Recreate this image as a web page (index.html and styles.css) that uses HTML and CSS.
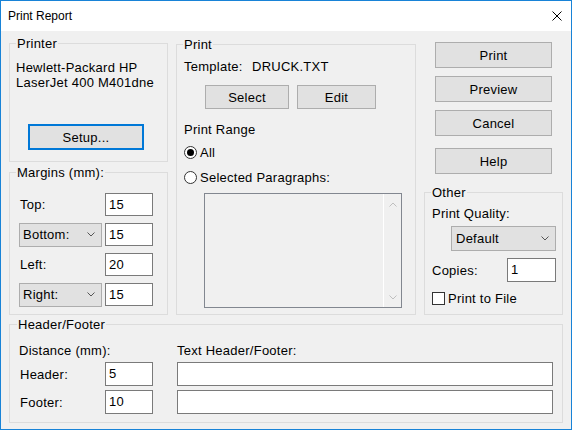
FILE: index.html
```html
<!DOCTYPE html>
<html lang="en">

<head>
  <meta charset="UTF-8">
  <meta name="viewport" content="width=device-width, initial-scale=1.0">
  <title>Print Report</title>
  <link rel="stylesheet" href="styles.css">
</head>

<body>
  <div class="window">
    <div class="titlebar">
      <span class="title">Print Report</span>
      <svg class="close" width="10" height="10" viewBox="0 0 10 10">
        <path d="M0.5 0.5 L9.5 9.5 M9.5 0.5 L0.5 9.5" stroke="#000" stroke-width="1" fill="none" />
      </svg>
    </div>

    <div class="dialog">
      <div class="top-row">
        <div class="col-left">
          <fieldset class="group printer">
            <legend>Printer</legend>
            <div class="printer-name">Hewlett-Packard HP<br>LaserJet 400 M401dne</div>
            <button class="btn btn-default setup-button">Setup...</button>
          </fieldset>

          <fieldset class="group margins">
            <legend>Margins (mm):</legend>
            <div class="margin-grid">
              <span class="field-label">Top:</span>
              <div class="textbox">15</div>
              <div class="combo">Bottom:<svg class="chevron" width="8" height="5" viewBox="0 0 8 5"><polyline points="0.5,0.5 4,4 7.5,0.5" /></svg></div>
              <div class="textbox">15</div>
              <span class="field-label">Left:</span>
              <div class="textbox">20</div>
              <div class="combo">Right:<svg class="chevron" width="8" height="5" viewBox="0 0 8 5"><polyline points="0.5,0.5 4,4 7.5,0.5" /></svg></div>
              <div class="textbox">15</div>
            </div>
          </fieldset>
        </div>

        <fieldset class="group print">
          <legend>Print</legend>
          <div class="template-row"><span class="template-label">Template:</span><span>DRUCK.TXT</span></div>
          <div class="template-buttons">
            <button class="btn select-button">Select</button>
            <button class="btn edit-button">Edit</button>
          </div>
          <div class="range-title">Print Range</div>
          <div class="radio-row radio-all">
            <span class="radio checked"></span>
            <span>All</span>
          </div>
          <div class="radio-row radio-selected">
            <span class="radio"></span>
            <span>Selected Paragraphs:</span>
          </div>
          <div class="listbox">
            <div class="list-items"></div>
            <div class="scrollbar">
              <svg width="8" height="5" viewBox="0 0 8 5"><polyline points="0.5,4.5 4,1 7.5,4.5" /></svg>
              <svg width="8" height="5" viewBox="0 0 8 5"><polyline points="0.5,0.5 4,4 7.5,0.5" /></svg>
            </div>
          </div>
        </fieldset>

        <div class="col-right">
          <button class="btn action-button">Print</button>
          <button class="btn action-button">Preview</button>
          <button class="btn action-button">Cancel</button>
          <button class="btn action-button help-button">Help</button>

          <fieldset class="group other">
            <legend>Other</legend>
            <div class="quality-label">Print Quality:</div>
            <div class="combo quality-combo">Default<svg class="chevron" width="8" height="5" viewBox="0 0 8 5"><polyline points="0.5,0.5 4,4 7.5,0.5" /></svg></div>
            <div class="copies-row">
              <span>Copies:</span>
              <div class="textbox">1</div>
            </div>
            <div class="check-row">
              <span class="checkbox"></span>
              <span>Print to File</span>
            </div>
          </fieldset>
        </div>
      </div>

      <fieldset class="group header-footer">
        <legend>Header/Footer</legend>
        <div class="hf-grid">
          <span class="hf-heading">Distance (mm):</span>
          <span class="hf-text-heading">Text Header/Footer:</span>
          <span class="field-label">Header:</span>
          <div class="textbox">5</div>
          <div class="textbox wide"></div>
          <span class="field-label">Footer:</span>
          <div class="textbox">10</div>
          <div class="textbox wide"></div>
        </div>
      </fieldset>
    </div>
  </div>
</body>

</html>
```

FILE: styles.css
```css
* {
  box-sizing: border-box;
}

body {
  margin: 0;
  background-color: #ffffff;
  font-family: 'Liberation Sans', Arial, sans-serif;
  font-size: 13px;
  line-height: 15px;
  color: #000000;
}

.window {
  width: 572px;
  height: 430px;
  border: 1px solid #1883d7;
  display: flex;
  flex-direction: column;
}

.titlebar {
  height: 30px;
  flex: none;
  background-color: #ffffff;
  display: flex;
  align-items: center;
  justify-content: space-between;
  padding: 0 9px 0 7px;
}

.title {
  font-size: 12px;
}

.dialog {
  flex: 1;
  background-color: #f0f0f0;
  padding: 5px 8px 0 8px;
  letter-spacing: 0.25px;
}

/* group boxes */
.group {
  margin: 0;
  padding: 0 6px;
  border: 1px solid #dcdcdc;
  min-width: 0;
}

.group legend {
  padding: 0 1px;
  margin-left: 0;
  line-height: 15px;
}

.top-row {
  display: grid;
  grid-template-columns: 159px 240px 139px;
  column-gap: 8px;
  height: 279px;
}

.col-left,
.col-right {
  display: flex;
  flex-direction: column;
}

/* buttons */
.btn {
  font-family: inherit;
  font-size: 13px;
  letter-spacing: inherit;
  color: #000000;
  background-color: #e1e1e1;
  border: 1px solid #adadad;
  padding: 0;
  display: block;
}

.btn-default {
  border: 2px solid #0078d7;
}

/* printer */
.printer {
  height: 126px;
}

.printer-name {
  margin-top: 9px;
}

.setup-button {
  width: 116px;
  height: 26px;
  margin: 34px 0 0 12px;
}

/* margins */
.margins {
  flex: 1;
  margin-top: 3px;
}

.margin-grid {
  display: grid;
  grid-template-columns: 83px 48px;
  grid-auto-rows: 23px;
  column-gap: 3px;
  row-gap: 7px;
  align-items: center;
  margin: 13px 0 0 3px;
}

.field-label {
  padding-left: 1px;
}

.textbox {
  height: 23px;
  background-color: #ffffff;
  border: 1px solid #7a7a7a;
  padding: 3px 0 0 3px;
}

.combo {
  height: 24px;
  background-color: #e1e1e1;
  border: 1px solid #adadad;
  display: flex;
  align-items: center;
  justify-content: space-between;
  padding: 0 6px 0 3px;
}

.chevron polyline,
.scrollbar polyline {
  fill: none;
  stroke: #555555;
  stroke-width: 1;
}

/* print */
.print {
  margin-top: 1px;
  height: 278px;
}

.template-row {
  margin-top: 7px;
}

.template-label {
  display: inline-block;
  width: 69px;
  padding-left: 1px;
}

.template-buttons {
  display: flex;
  gap: 8px;
  margin: 11px 0 0 22px;
}

.select-button {
  width: 84px;
  height: 24px;
}

.edit-button {
  width: 79px;
  height: 24px;
}

.range-title {
  margin-top: 13px;
  padding-left: 1px;
}

.radio-row {
  display: flex;
  align-items: center;
  gap: 3px;
  padding-left: 1px;
}

.radio-all {
  margin-top: 8px;
}

.radio-selected {
  margin-top: 10px;
}

.radio {
  width: 13px;
  height: 13px;
  border: 1px solid #333333;
  border-radius: 50%;
  background-color: #ffffff;
  display: flex;
  align-items: center;
  justify-content: center;
}

.radio.checked::after {
  content: '';
  width: 7px;
  height: 7px;
  border-radius: 50%;
  background-color: #000000;
}

.listbox {
  display: flex;
  width: 198px;
  height: 115px;
  margin: 8px 0 0 21px;
  border: 1px solid #828790;
  background-color: #f0f0f0;
}

.list-items {
  flex: 1;
}

.scrollbar {
  width: 18px;
  border-left: 1px solid #ffffff;
  display: flex;
  flex-direction: column;
  justify-content: space-between;
  align-items: center;
  padding: 8px 0 7px 0;
}

.scrollbar polyline {
  stroke: #bfbfbf;
}

/* right column */
.action-button {
  width: 117px;
  height: 26px;
  margin: 8px auto 0 auto;
}

.action-button:first-child {
  margin-top: 6px;
}

.help-button {
  margin-top: 12px;
}

.other {
  flex: 1;
  margin-top: 11px;
}

.quality-label {
  margin-top: 6px;
  padding-left: 1px;
}

.quality-combo {
  width: 105px;
  height: 25px;
  margin: 5px 0 0 20px;
  padding-left: 4px;
}

.copies-row {
  display: grid;
  grid-template-columns: 75px 49px;
  align-items: center;
  margin-top: 7px;
  padding-left: 1px;
}

.copies-row .textbox {
  height: 24px;
}

.check-row {
  display: flex;
  align-items: center;
  gap: 3px;
  margin-top: 9px;
  padding-left: 1px;
}

.checkbox {
  width: 13px;
  height: 13px;
  border: 1px solid #333333;
  background-color: #ffffff;
}

/* header / footer */
.header-footer {
  margin-top: 2px;
  height: 106px;
}

.header-footer legend {
  margin-left: 1px;
}

.hf-grid {
  display: grid;
  grid-template-columns: 86px 48px 1fr;
  grid-template-rows: 15px 24px 24px;
  row-gap: 4px;
  align-items: center;
  margin: 11px 3px 0 3px;
}

.hf-heading {
  grid-column: 1 / 3;
}

.hf-text-heading,
.textbox.wide {
  margin-left: 24px;
}

.hf-grid .textbox {
  height: 24px;
}
```
